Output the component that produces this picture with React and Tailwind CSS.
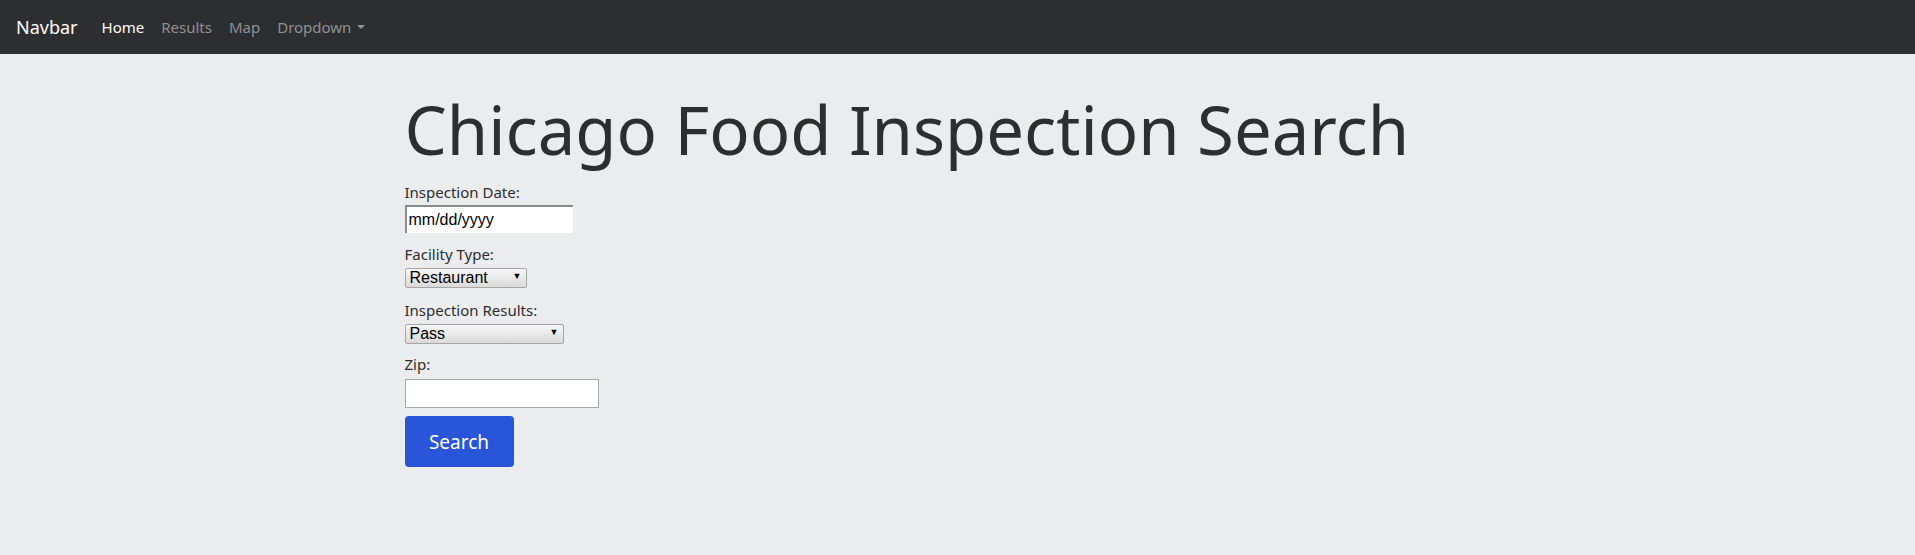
import { useState } from 'react';

const NAV_LINKS = [
  { label: 'Home', active: true },
  { label: 'Results' },
  { label: 'Map' },
];

function FakeSelect({ value, options, width, onChange }) {
  return (
    <div className={`relative ${width} h-[20px]`}>
      <select
        value={value}
        onChange={e => onChange(e.target.value)}
        className="appearance-none w-full h-full rounded-[2px] border border-[#a5a5a5] bg-gradient-to-b from-[#f7f7f7] to-[#dadada] pl-[4px] pr-[20px] text-[16px] leading-[18px] text-black font-['Liberation_Sans',Arial,sans-serif] outline-none"
      >
        {options.map(o => <option key={o}>{o}</option>)}
      </select>
      <span className="pointer-events-none absolute right-[5px] top-[5px] text-[9px] leading-none text-black">▼</span>
    </div>
  );
}

export default function App() {
  const [facility, setFacility] = useState('Restaurant');
  const [result, setResult] = useState('Pass');
  const [zip, setZip] = useState('');
  const [date, setDate] = useState('');

  return (
    <div className="min-h-[555px] bg-[#ebecee] font-['Noto_Sans','Open_Sans',sans-serif] text-[#2d2e30]">
      <nav className="h-[54px] bg-[#2d2e30] flex items-center px-[16px]">
        <a className="text-[18px] text-white mr-[24px] leading-none">Navbar</a>
        <ul className="flex items-center gap-[17px] text-[15px]">
          {NAV_LINKS.map(l => (
            <li key={l.label} className={l.active ? 'text-white' : 'text-[#909193]'}>{l.label}</li>
          ))}
          <li className="text-[#909193] flex items-center">
            Dropdown
            <span className="ml-[6px] w-0 h-0 border-l-[4px] border-r-[4px] border-t-[4px] border-l-transparent border-r-transparent border-t-[#909193]" />
          </li>
        </ul>
      </nav>

      <main className="max-w-[1140px] mx-auto px-[17px] pt-[35px]">
        <h1 className="text-[67px] leading-[1.2] font-normal">Chicago Food Inspection Search</h1>

        <form className="mt-[12px] text-[15px]" onSubmit={e => e.preventDefault()}>
          <label className="block h-[22px] leading-[22px] mb-[2px]">Inspection Date:</label>
          <input
            type="text"
            value={date}
            onChange={e => setDate(e.target.value)}
            placeholder="mm/dd/yyyy"
            className="block w-[168px] h-[28px] bg-white border-t-2 border-l-2 border-t-[#8a8a8a] border-l-[#8a8a8a] px-[2px] text-[16px] text-black placeholder:text-black font-['Liberation_Sans',Arial,sans-serif] outline-none"
          />

          <label className="block h-[22px] leading-[22px] mt-[10px] mb-[1px]">Facility Type:</label>
          <FakeSelect
            value={facility}
            onChange={setFacility}
            width="w-[122px]"
            options={['Restaurant', 'Grocery Store', 'School', 'Bakery']}
          />

          <label className="block h-[22px] leading-[22px] mt-[13px] mb-[1px]">Inspection Results:</label>
          <FakeSelect
            value={result}
            onChange={setResult}
            width="w-[159px]"
            options={['Pass', 'Pass w/ Conditions', 'Fail']}
          />

          <label className="block h-[22px] leading-[22px] mt-[11px] mb-[4px]">Zip:</label>
          <input
            type="text"
            value={zip}
            onChange={e => setZip(e.target.value)}
            className="block w-[194px] h-[29px] bg-white border border-[#a9a9a9] px-[2px] text-[16px] text-black outline-none"
          />

          <button
            type="submit"
            className="mt-[8px] w-[109px] h-[51px] rounded-[4px] bg-[#2955d9] text-white text-[19px]"
          >
            Search
          </button>
        </form>
      </main>
    </div>
  );
}
